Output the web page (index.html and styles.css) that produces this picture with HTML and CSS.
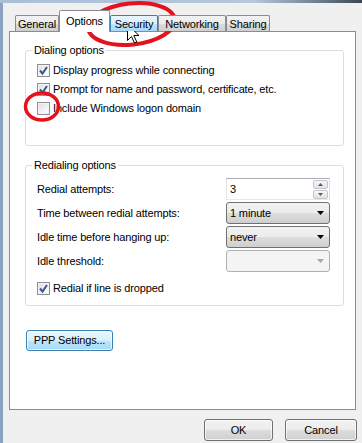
FILE: index.html
```html
<!DOCTYPE html>
<html>
<head>
<meta charset="utf-8">
<link rel="stylesheet" href="styles.css">
</head>
<body>
<div class="frame-top"></div>
<div class="dialog">
  <div class="tabs">
    <div class="tab t-general">General</div>
    <div class="tab t-options selected">Options</div>
    <div class="tab t-security hover">Security</div>
    <div class="tab t-networking">Networking</div>
    <div class="tab t-sharing">Sharing</div>
  </div>
  <div class="panel">
    <fieldset class="group group-dial">
      <legend>Dialing options</legend>
      <div class="check-row"><span class="cb checked"><svg viewBox="0 0 13 13" width="13" height="13"><path d="M3 6.5 L5.5 9.5 L10 3" fill="none" stroke="#3d5590" stroke-width="2"/></svg></span><span>Display progress while connecting</span></div>
      <div class="check-row"><span class="cb checked"><svg viewBox="0 0 13 13" width="13" height="13"><path d="M3 6.5 L5.5 9.5 L10 3" fill="none" stroke="#3d5590" stroke-width="2"/></svg></span><span>Prompt for name and password, certificate, etc.</span></div>
      <div class="check-row"><span class="cb"></span><span>Include Windows logon domain</span></div>
    </fieldset>
    <fieldset class="group group-redial">
      <legend>Redialing options</legend>
      <div class="field-row"><span>Redial attempts:</span>
        <div class="spin"><span class="spin-val">3</span><span class="spin-btns"><span class="spin-b"><svg width="5" height="3" viewBox="0 0 5 3"><path d="M0 3 L2.5 0 L5 3Z" fill="#5a5a5a"/></svg></span><span class="spin-b"><svg width="5" height="3" viewBox="0 0 5 3"><path d="M0 0 L2.5 3 L5 0Z" fill="#5a5a5a"/></svg></span></span></div>
      </div>
      <div class="field-row"><span>Time between redial attempts:</span>
        <div class="combo"><span>1 minute</span><svg width="7" height="4" viewBox="0 0 7 4"><path d="M0 0 L7 0 L3.5 4Z" fill="#000"/></svg></div>
      </div>
      <div class="field-row"><span>Idle time before hanging up:</span>
        <div class="combo"><span>never</span><svg width="7" height="4" viewBox="0 0 7 4"><path d="M0 0 L7 0 L3.5 4Z" fill="#000"/></svg></div>
      </div>
      <div class="field-row"><span>Idle threshold:</span>
        <div class="combo disabled"><span></span><svg width="7" height="4" viewBox="0 0 7 4"><path d="M0 0 L7 0 L3.5 4Z" fill="#a8a8a8"/></svg></div>
      </div>
      <div class="check-row last"><span class="cb checked"><svg viewBox="0 0 13 13" width="13" height="13"><path d="M3 6.5 L5.5 9.5 L10 3" fill="none" stroke="#3d5590" stroke-width="2"/></svg></span><span>Redial if line is dropped</span></div>
    </fieldset>
    <div class="btn default ppp">PPP Settings...</div>
  </div>
  <div class="footer">
    <div class="btn ok">OK</div>
    <div class="btn cancel">Cancel</div>
  </div>
</div>
<svg class="annot" width="362" height="443" viewBox="0 0 362 443">
  <ellipse cx="131.5" cy="24" rx="43.5" ry="20.5" transform="rotate(-6 131.5 24)" fill="none" stroke="#e3121c" stroke-width="4"/>
  <ellipse cx="42" cy="106.5" rx="16.5" ry="13.5" fill="none" stroke="#e3121c" stroke-width="3.5"/>
  <path d="M127.5 24.5 V40.5 L131.5 36.5 L134.5 43 L136.8 42 L133.8 35.5 H139 Z" fill="#fff" stroke="#000" stroke-width="1" stroke-linejoin="miter"/>
</svg>
</body>
</html>
```

FILE: styles.css
```css
html, body {
  margin: 0;
  padding: 0;
}
body {
  width: 362px;
  height: 443px;
  overflow: hidden;
  background: #f0f0f0;
  font-family: "Liberation Sans", Arial, sans-serif;
  font-size: 11px;
  letter-spacing: -0.15px;
  line-height: 13px;
  color: #000;
  position: relative;
}
.frame-top {
  height: 3px;
  background: linear-gradient(to right, #a9c0d8 0%, #b5c8dc 70%, #6d7e90 88%, #3d4650 100%);
}
.dialog {
  height: 440px;
  border-left: 3px solid #8aa4c0;
  box-sizing: border-box;
  display: flex;
  flex-direction: column;
}
.tabs {
  position: relative;
  z-index: 1;
  display: flex;
  align-items: flex-end;
  height: 22px;
  margin-top: 7px;
  margin-bottom: -1px;
  padding-left: 12px;
}
.tab {
  box-sizing: border-box;
  height: 16px;
  border: 1px solid #898c95;
  border-bottom: none;
  border-radius: 2px 2px 0 0;
  text-align: center;
  padding-top: 2px;
  margin-bottom: 1px;
  background: linear-gradient(#f2f2f2 0%, #ebebeb 50%, #dddddd 51%, #cfcfcf 100%);
}
.t-general { width: 44px; }
.t-options { width: 51px; }
.t-security { width: 48px; }
.t-networking { width: 68px; }
.t-sharing { width: 44px; }
.tab.selected {
  height: 22px;
  margin-bottom: 0;
  background: #fff;
  padding-top: 4px;
}
.tab.hover {
  border-color: #3c7fb1;
  background: linear-gradient(#eaf6fd 0%, #d9f0fc 50%, #bee6fd 51%, #a7d9f5 100%);
}
.panel {
  box-sizing: border-box;
  height: 379px;
  margin-left: 6px;
  width: 347px;
  background: #fff;
  border: 1px solid #898c95;
  padding-top: 12px;
}
.group {
  margin: 0 11px 0 15px;
  border: 1px solid #d5dfe5;
  border-radius: 3px;
  padding: 0 13px 0 11px;
  min-width: 0;
}
.group legend {
  padding: 0 2px;
  margin-left: -5px;
  line-height: 13px;
}
.group-dial {
  padding-bottom: 30px;
}
.group-dial .check-row:first-of-type {
  margin-top: 7px;
}
.check-row {
  display: flex;
  align-items: center;
  height: 13px;
  margin-top: 6px;
}
.cb {
  box-sizing: border-box;
  width: 13px;
  height: 13px;
  border: 1px solid #8f8f8f;
  background: linear-gradient(135deg, #dcdcdc 0%, #f4f4f4 60%, #ffffff 100%);
  box-shadow: inset 0 0 0 1px #f4f4f4;
  margin-right: 3px;
  display: flex;
}
.cb svg {
  margin: -1px;
}
.group-redial {
  margin-top: 13px;
  padding-bottom: 10px;
}
.field-row {
  display: flex;
  align-items: center;
  justify-content: space-between;
  height: 22px;
  margin-top: 2px;
}
.group-redial .field-row:first-of-type {
  margin-top: 6px;
}
.check-row.last {
  margin-top: 10px;
}
.spin {
  box-sizing: border-box;
  width: 104px;
  height: 22px;
  border: 1px solid #abadb3;
  border-left-color: #e2e3ea;
  border-right-color: #dbdfe6;
  border-bottom-color: #e3e9ef;
  background: #fff;
  display: flex;
  align-items: center;
  justify-content: space-between;
  padding-left: 3px;
  padding-right: 1px;
}
.spin-btns {
  display: flex;
  flex-direction: column;
  gap: 1px;
}
.spin-b {
  box-sizing: border-box;
  width: 15px;
  height: 9px;
  border: 1px solid #c4c6cb;
  border-radius: 2px;
  background: linear-gradient(#f7f7f7, #e3e3e3);
  display: flex;
  align-items: center;
  justify-content: center;
}
.combo {
  box-sizing: border-box;
  width: 104px;
  height: 22px;
  border: 1px solid #707070;
  border-radius: 3px;
  background: linear-gradient(#f2f2f2 0%, #ebebeb 50%, #dddddd 51%, #cfcfcf 100%);
  display: flex;
  align-items: center;
  justify-content: space-between;
  padding: 0 5px 0 3px;
}
.combo.disabled {
  border-color: #adb2b5;
  background: #f4f4f4;
}
.btn {
  box-sizing: border-box;
  border: 1px solid #707070;
  border-radius: 3px;
  background: linear-gradient(#f2f2f2 0%, #ebebeb 50%, #dddddd 51%, #cfcfcf 100%);
  box-shadow: inset 0 0 0 1px rgba(255,255,255,0.7);
  display: flex;
  align-items: center;
  justify-content: center;
}
.btn.default {
  border-color: #3c7fb1;
  background: linear-gradient(#eaf6fd 0%, #d9f0fc 50%, #bee6fd 51%, #a7d9f5 100%);
}
.ppp {
  width: 87px;
  height: 21px;
  margin: 24px 0 0 16px;
}
.footer {
  display: flex;
  justify-content: flex-end;
  gap: 12px;
  padding: 9px 5px 0 0;
}
.ok {
  width: 69px;
  height: 22px;
}
.cancel {
  width: 72px;
  height: 22px;
}
.annot {
  position: absolute;
  left: 0;
  top: 0;
  pointer-events: none;
}
```
